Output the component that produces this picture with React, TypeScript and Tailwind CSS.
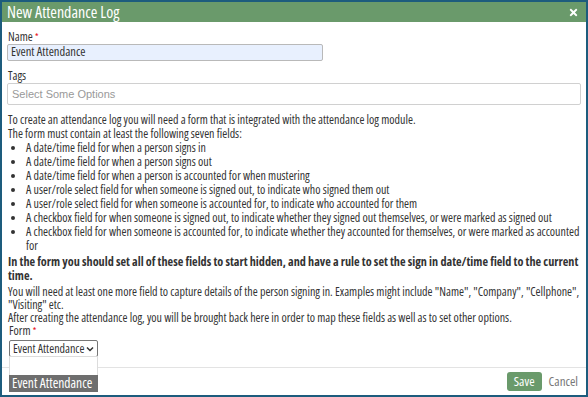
import { FaTimes } from 'react-icons/fa';

const bullets = [
  'A date/time field for when a person signs in',
  'A date/time field for when a person signs out',
  'A date/time field for when a person is accounted for when mustering',
  'A user/role select field for when someone is signed out, to indicate who signed them out',
  'A user/role select field for when someone is accounted for, to indicate who accounted for them',
  'A checkbox field for when someone is signed out, to indicate whether they signed out themselves, or were marked as signed out',
  'A checkbox field for when someone is accounted for, to indicate whether they accounted for themselves, or were marked as accounted for',
];

export default function App() {
  return (
    <div className="w-[588px] h-[397px] bg-white border-2 border-[#1d5c7d] flex flex-col text-[#333] font-['Open_Sans',sans-serif] [font-stretch:condensed] overflow-hidden">
      {/* Header */}
      <div className="h-[20px] bg-[#6a9a6b] flex items-center justify-between pl-[5px] pr-[7px] shrink-0">
        <span className="text-white text-[16px] leading-none">New Attendance Log</span>
        <FaTimes className="text-white text-[11px]" />
      </div>

      {/* Body */}
      <div className="flex-1 px-[5px] pt-[8px] relative">
        <div className="pl-[1px] text-[12px] leading-[14px]">
          Name <span className="text-red-600 text-[9px] align-top">*</span>
        </div>
        <input
          defaultValue="Event Attendance"
          className="block w-[316px] h-[17px] bg-[#e8f0fe] border border-[#b9b9b9] rounded-[2px] px-[3px] text-[12.5px] outline-none"
        />

        <div className="mt-[8px] pl-[1px] text-[12px] leading-[14px]">Tags</div>
        <div className="h-[22px] w-[574px] border border-[#d0d0d0] rounded-[2px] flex items-center px-[4px] text-[11px] text-[#999] font-['Liberation_Sans',sans-serif] [font-stretch:normal]">
          Select Some Options
        </div>

        <div className="mt-[8px] pl-[1px] text-[12px] leading-[14px]">
          <p>To create an attendance log you will need a form that is integrated with the attendance log module.</p>
          <p>The form must contain at least the following seven fields:</p>
          <ul className="list-disc pl-[18px]">
            {bullets.map(b => (
              <li key={b}>{b}</li>
            ))}
          </ul>
          <p className="font-bold text-[12.2px] leading-[14px] mt-[2px]">
            In the form you should set all of these fields to start hidden, and have a rule to set the sign in date/time field to the current time.
          </p>
          <p className="mt-[2px] leading-[13px]">
            You will need at least one more field to capture details of the person signing in. Examples might include "Name", "Company", "Cellphone", "Visiting" etc.
          </p>
          <p className="leading-[13px]">After creating the attendance log, you will be brought back here in order to map these fields as well as to set other options.</p>
        </div>

        <div className="pl-[2px] text-[12px] leading-[14px]">
          Form <span className="text-red-600 text-[9px] align-top">*</span>
        </div>
        <div className="mt-[2px] ml-[2px] w-[89px] h-[17px] border border-[#767676] rounded-[2px] flex items-center justify-between pl-[3px] pr-[3px] text-[12px]">
          <span>Event Attendance</span>
          <svg width="8" height="6" viewBox="0 0 8 6">
            <path d="M1 1.5 L4 4.5 L7 1.5" fill="none" stroke="#333" strokeWidth="1.5" />
          </svg>
        </div>

        {/* open select list */}
        <div className="absolute left-[7px] top-[334px] w-[89px] z-10 bg-white">
          <div className="h-[19px] border border-[#dcdcdc] border-b-0" />
          <div className="h-[17px] bg-[#6e6e6e] text-white text-[13.5px] leading-[17px] px-[3px] whitespace-nowrap">Event Attendance</div>
        </div>
      </div>

      {/* Footer */}
      <div className="h-[28px] border-t border-[#e3e3e3] flex items-center justify-end gap-[7px] pr-[8px] shrink-0">
        <button className="h-[19px] px-[7px] bg-[#6a9a6b] text-white text-[13px] leading-[19px] rounded-[3px]">Save</button>
        <button className="text-[13px] text-[#777]">Cancel</button>
      </div>
    </div>
  );
}
